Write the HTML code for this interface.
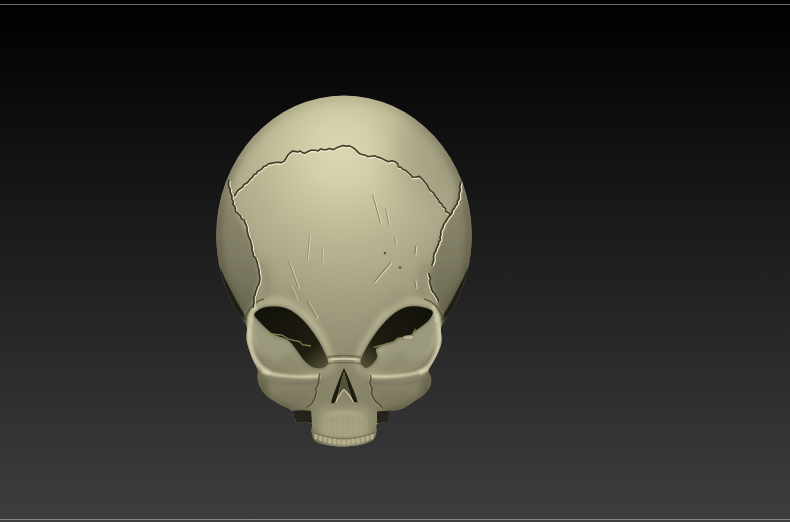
<!DOCTYPE html>
<html><head><meta charset="utf-8">
<style>
html,body{margin:0;padding:0;background:#000;}
body{width:790px;height:522px;overflow:hidden;position:relative;font-family:"Liberation Sans",sans-serif;}
svg{position:absolute;left:0;top:0;display:block;}
</style></head><body>
<svg width="790" height="522" viewBox="0 0 790 522">
<defs>
<linearGradient id="bg" x1="0" y1="0" x2="0" y2="1">
<stop offset="0" stop-color="#000"/>
<stop offset="0.12" stop-color="#070707"/>
<stop offset="1" stop-color="#3e3e3e"/>
</linearGradient>
<radialGradient id="sk" gradientUnits="userSpaceOnUse" cx="344" cy="165" r="210" fx="340" fy="150">
<stop offset="0" stop-color="#dcd8b2"/>
<stop offset="0.15" stop-color="#d3cfaa"/>
<stop offset="0.3" stop-color="#c4c09c"/>
<stop offset="0.48" stop-color="#b3af8f"/>
<stop offset="0.68" stop-color="#a29e80"/>
<stop offset="1" stop-color="#8a866b"/>
</radialGradient>
<linearGradient id="sockL" gradientUnits="userSpaceOnUse" x1="275" y1="310" x2="322" y2="366">
<stop offset="0" stop-color="#14130b"/>
<stop offset="0.72" stop-color="#1f1d10"/>
<stop offset="1" stop-color="#4e4a33"/>
</linearGradient>
<linearGradient id="sockR" gradientUnits="userSpaceOnUse" x1="415" y1="310" x2="368" y2="366">
<stop offset="0" stop-color="#14130b"/>
<stop offset="0.72" stop-color="#1f1d10"/>
<stop offset="1" stop-color="#4e4a33"/>
</linearGradient>
<linearGradient id="maxG" gradientUnits="userSpaceOnUse" x1="0" y1="400" x2="0" y2="446">
<stop offset="0" stop-color="#bcb894" stop-opacity="0"/>
<stop offset="0.4" stop-color="#bcb894" stop-opacity="0.7"/>
<stop offset="1" stop-color="#b6b28f"/>
</linearGradient>
<linearGradient id="tempL" gradientUnits="userSpaceOnUse" x1="0" y1="160" x2="0" y2="330">
<stop offset="0" stop-color="#9a9679" stop-opacity="0"/>
<stop offset="0.15" stop-color="#948f73" stop-opacity="0.7"/>
<stop offset="0.3" stop-color="#7f7c63" stop-opacity="1"/>
<stop offset="0.6" stop-color="#716e58"/>
<stop offset="1" stop-color="#55533f"/>
</linearGradient>
<linearGradient id="tempR" gradientUnits="userSpaceOnUse" x1="0" y1="160" x2="0" y2="330">
<stop offset="0" stop-color="#9a9679" stop-opacity="0"/>
<stop offset="0.15" stop-color="#948f73" stop-opacity="0.7"/>
<stop offset="0.3" stop-color="#7f7c63" stop-opacity="1"/>
<stop offset="0.6" stop-color="#716e58"/>
<stop offset="1" stop-color="#55533f"/>
</linearGradient>
<linearGradient id="edgeG" gradientUnits="userSpaceOnUse" x1="0" y1="95" x2="0" y2="330">
<stop offset="0" stop-color="#4e4b37" stop-opacity="0.15"/>
<stop offset="0.3" stop-color="#4e4b37" stop-opacity="0.55"/>
<stop offset="1" stop-color="#4e4b37" stop-opacity="0.85"/>
</linearGradient>
<filter id="b2" filterUnits="userSpaceOnUse" x="0" y="0" width="790" height="522"><feGaussianBlur stdDeviation="2"/></filter>
<filter id="b3" filterUnits="userSpaceOnUse" x="0" y="0" width="790" height="522"><feGaussianBlur stdDeviation="3"/></filter>
<filter id="b4" filterUnits="userSpaceOnUse" x="0" y="0" width="790" height="522"><feGaussianBlur stdDeviation="4"/></filter>
<filter id="b5" filterUnits="userSpaceOnUse" x="0" y="0" width="790" height="522"><feGaussianBlur stdDeviation="5"/></filter>
<filter id="b8" filterUnits="userSpaceOnUse" x="0" y="0" width="790" height="522"><feGaussianBlur stdDeviation="8"/></filter>
<filter id="b12" filterUnits="userSpaceOnUse" x="0" y="0" width="790" height="522"><feGaussianBlur stdDeviation="12"/></filter>
<filter id="b1" filterUnits="userSpaceOnUse" x="0" y="0" width="790" height="522"><feGaussianBlur stdDeviation="1"/></filter>
<filter id="b05" filterUnits="userSpaceOnUse" x="0" y="0" width="790" height="522"><feGaussianBlur stdDeviation="0.6"/></filter>
<clipPath id="clip"><path d="M216.3,235.0 A127.7,139.5 0 1,1 471.7,235.0 A127.7,139.5 0 1,1 216.3,235.0 Z"/><path d="M461.4,290.0 C459.7,293.3 455.0,304.2 451.7,310.0 C448.4,315.8 443.2,319.8 441.6,325.0 C439.9,330.2 442.1,336.6 441.6,341.0 C441.1,345.4 439.9,348.1 438.5,351.6 C437.1,355.1 434.9,358.8 433.2,362.0 C431.5,365.2 428.9,368.1 428.5,370.6 C428.1,373.1 430.7,374.6 431.0,377.0 C431.3,379.4 431.5,382.5 430.5,385.3 C429.5,388.1 427.5,391.3 425.0,393.8 C422.5,396.3 419.0,398.1 415.3,400.5 C411.6,402.9 407.2,406.6 403.0,408.5 C398.8,410.4 392.5,409.9 390.0,412.0 C387.5,414.1 390.2,419.0 388.0,421.0 C385.8,423.0 378.9,422.2 377.0,424.0 C375.1,425.8 377.2,429.3 376.5,432.0 C375.8,434.7 375.4,437.9 373.0,440.0 C370.6,442.1 366.8,443.4 362.0,444.5 C357.2,445.6 350.0,446.4 344.0,446.5 C338.0,446.6 330.8,445.9 326.0,445.0 C321.2,444.1 317.4,443.2 315.0,441.0 C312.6,438.8 312.2,435.0 311.5,432.0 C310.8,429.0 313.6,424.7 311.0,423.0 C308.4,421.3 299.2,424.0 296.0,422.0 C292.8,420.0 294.8,414.0 292.0,411.0 C289.2,408.0 283.1,406.4 279.0,404.0 C274.9,401.6 270.7,399.4 267.5,396.6 C264.3,393.8 261.7,390.2 260.0,387.0 C258.3,383.8 257.9,380.4 257.5,377.5 C257.1,374.6 258.4,372.8 257.5,369.5 C256.6,366.2 253.8,362.9 252.0,358.0 C250.2,353.1 247.4,345.5 246.5,340.0 C245.6,334.5 248.1,330.0 246.4,325.0 C244.7,320.0 239.6,315.8 236.3,310.0 C233.0,304.2 228.3,293.3 226.6,290.0  L344,250 Z"/></clipPath>
</defs>
<rect x="0" y="0" width="790" height="522" fill="url(#bg)"/>
<rect x="0" y="4" width="790" height="1" fill="#6a6a6a"/>
<rect x="0" y="519" width="790" height="1" fill="#888"/>

<g clip-path="url(#clip)">
<rect x="200" y="90" width="290" height="360" fill="url(#sk)"/>
<ellipse cx="440" cy="150" rx="45" ry="50" fill="#87846a" opacity="0.35" filter="url(#b12)"/>
<path d="M286,296 C300,312 318,335 330,356" fill="none" stroke="#85816a" stroke-width="10" opacity="0.35" filter="url(#b5)"/>
<path d="M402,296 C388,312 370,335 358,356" fill="none" stroke="#85816a" stroke-width="10" opacity="0.35" filter="url(#b5)"/>
<path d="M252,312 C262,304 285,300 300,310" fill="none" stroke="#6d6a52" stroke-width="4" opacity="0.45" filter="url(#b2)"/>
<path d="M436,312 C426,304 403,300 388,310" fill="none" stroke="#6d6a52" stroke-width="4" opacity="0.45" filter="url(#b2)"/>
<path d="M229,176 L236,212 L250,239 L258,267 L260,278 L255,292 L253,308 L254,316 L244,330 L225,300 L216,260 L216,220 L222,190 Z" fill="url(#tempL)" opacity="0.75" filter="url(#b2)"/>
<path d="M461,178 L450,215 L438,244 L432,265 L429,273 L431,287 L438,302 L434,313 L444,330 L462,300 L472,260 L472,220 L466,190 Z" fill="url(#tempR)" opacity="0.75" filter="url(#b2)"/>
<path d="M262,262 C268,280 270,295 262,310" fill="none" stroke="#8a8769" stroke-width="8" opacity="0.55" filter="url(#b3)"/>
<path d="M426,262 C420,280 418,295 426,310" fill="none" stroke="#8a8769" stroke-width="8" opacity="0.55" filter="url(#b3)"/>
<path d="M244.2,322.0 A127.7,139.5 0 1,1 443.8,322.0" fill="none" stroke="url(#edgeG)" stroke-width="8" filter="url(#b4)"/>
<path d="M461.4,290.0 C459.7,293.3 455.0,304.2 451.7,310.0 C448.4,315.8 443.2,319.8 441.6,325.0 C439.9,330.2 442.1,336.6 441.6,341.0 C441.1,345.4 439.9,348.1 438.5,351.6 C437.1,355.1 434.9,358.8 433.2,362.0 C431.5,365.2 428.9,368.1 428.5,370.6 C428.1,373.1 430.7,374.6 431.0,377.0 C431.3,379.4 431.5,382.5 430.5,385.3 C429.5,388.1 427.5,391.3 425.0,393.8 C422.5,396.3 419.0,398.1 415.3,400.5 C411.6,402.9 407.2,406.6 403.0,408.5 C398.8,410.4 392.5,409.9 390.0,412.0 C387.5,414.1 390.2,419.0 388.0,421.0 C385.8,423.0 378.9,422.2 377.0,424.0 C375.1,425.8 377.2,429.3 376.5,432.0 C375.8,434.7 375.4,437.9 373.0,440.0 C370.6,442.1 366.8,443.4 362.0,444.5 C357.2,445.6 350.0,446.4 344.0,446.5 C338.0,446.6 330.8,445.9 326.0,445.0 C321.2,444.1 317.4,443.2 315.0,441.0 C312.6,438.8 312.2,435.0 311.5,432.0 C310.8,429.0 313.6,424.7 311.0,423.0 C308.4,421.3 299.2,424.0 296.0,422.0 C292.8,420.0 294.8,414.0 292.0,411.0 C289.2,408.0 283.1,406.4 279.0,404.0 C274.9,401.6 270.7,399.4 267.5,396.6 C264.3,393.8 261.7,390.2 260.0,387.0 C258.3,383.8 257.9,380.4 257.5,377.5 C257.1,374.6 258.4,372.8 257.5,369.5 C256.6,366.2 253.8,362.9 252.0,358.0 C250.2,353.1 247.4,345.5 246.5,340.0 C245.6,334.5 248.1,330.0 246.4,325.0 C244.7,320.0 239.6,315.8 236.3,310.0 C233.0,304.2 228.3,293.3 226.6,290.0 " fill="none" stroke="#4e4b37" stroke-width="6" filter="url(#b3)" opacity="0.6"/>
<path d="M218.0,268.4 L218.7,271.5 L219.5,274.5 L220.3,277.6 L221.2,280.6 L222.2,283.6 L223.3,286.7 L224.4,289.7 L225.6,292.8 L226.9,295.8 L228.2,298.8 L229.7,301.9 L231.2,304.9 L232.9,308.0 L234.6,311.0 L236.4,314.1 L238.4,317.1 L240.4,320.1 L242.6,323.2 L244.8,326.2 L247.3,329.3 L252.3,325.1 L250.0,322.2 L247.8,319.3 L245.7,316.4 L243.8,313.5 L242.0,310.6 L240.2,307.7 L238.6,304.8 L237.0,301.9 L235.5,299.0 L234.0,296.2 L232.5,293.4 L231.0,290.5 L229.6,287.7 L228.2,284.9 L226.8,282.1 L225.4,279.3 L224.1,276.5 L222.8,273.6 L221.6,270.8 L220.4,267.9 Z" fill="#1c1b15" opacity="0.95" filter="url(#b05)"/>
<path d="M470.0,268.4 L469.3,271.5 L468.5,274.5 L467.7,277.6 L466.8,280.6 L465.8,283.6 L464.7,286.7 L463.6,289.7 L462.4,292.8 L461.1,295.8 L459.8,298.8 L458.3,301.9 L456.8,304.9 L455.1,308.0 L453.4,311.0 L451.6,314.1 L449.6,317.1 L447.6,320.1 L445.4,323.2 L443.2,326.2 L440.7,329.3 L435.7,325.1 L438.0,322.2 L440.2,319.3 L442.3,316.4 L444.2,313.5 L446.0,310.6 L447.8,307.7 L449.4,304.8 L451.0,301.9 L452.5,299.0 L454.0,296.2 L455.5,293.4 L457.0,290.5 L458.4,287.7 L459.8,284.9 L461.2,282.1 L462.6,279.3 L463.9,276.5 L465.2,273.6 L466.4,270.8 L467.6,267.9 Z" fill="#1c1b15" opacity="0.95" filter="url(#b05)"/>
<path d="M246.0,318.0 C247.7,313.7 251.7,307.3 256.0,304.0 C260.3,300.7 266.3,298.7 272.0,298.0 C277.7,297.3 284.5,298.2 290.0,300.0 C295.5,301.8 300.3,305.0 305.0,309.0 C309.7,313.0 314.2,318.5 318.0,324.0 C321.8,329.5 325.3,336.0 328.0,342.0 C330.7,348.0 333.3,355.0 334.0,360.0 C334.7,365.0 334.7,369.3 332.0,372.0 C329.3,374.7 323.3,375.7 318.0,376.0 C312.7,376.3 306.3,375.7 300.0,374.0 C293.7,372.3 286.0,369.0 280.0,366.0 C274.0,363.0 268.7,359.8 264.0,356.0 C259.3,352.2 255.0,347.3 252.0,343.0 C249.0,338.7 247.0,334.2 246.0,330.0 C245.0,325.8 244.3,322.3 246.0,318.0 Z" fill="#cfcba7" opacity="0.6" filter="url(#b3)"/>
<path d="M442.0,318.0 C440.2,313.5 436.3,306.3 432.0,303.0 C427.7,299.7 421.7,298.2 416.0,298.0 C410.3,297.8 403.5,299.7 398.0,302.0 C392.5,304.3 387.5,307.7 383.0,312.0 C378.5,316.3 374.8,322.3 371.0,328.0 C367.2,333.7 362.7,340.3 360.0,346.0 C357.3,351.7 355.3,357.5 355.0,362.0 C354.7,366.5 355.2,370.5 358.0,373.0 C360.8,375.5 366.3,376.8 372.0,377.0 C377.7,377.2 385.3,375.8 392.0,374.0 C398.7,372.2 406.0,369.2 412.0,366.0 C418.0,362.8 423.7,359.0 428.0,355.0 C432.3,351.0 435.5,346.2 438.0,342.0 C440.5,337.8 442.3,334.0 443.0,330.0 C443.7,326.0 443.8,322.5 442.0,318.0 Z" fill="#cfcba7" opacity="0.6" filter="url(#b3)"/>
<path d="M255,316 L259,322 L267,329 L274,334.5 L288,340 L297,350 L305,362 L316,369 L300,373 L280,369 L265,360 L256,344 L253,328 Z" fill="#777562" opacity="0.4" filter="url(#b2)"/>
<path d="M433,313 L428,321.6 L418,330 L412.5,336 L402,339 L394,343 L384,347.4 L377,357.5 L370,366 L388,373 L408,369 L423,360 L432,344 L436,328 Z" fill="#777562" opacity="0.4" filter="url(#b2)"/>
<path d="M290,352 C300,362 310,368 326,368 L318,377 C300,376 285,370 275,362 Z" fill="#7b7759" opacity="0.35" filter="url(#b3)"/>
<path d="M398,352 C388,362 378,368 362,368 L370,377 C388,376 403,370 413,362 Z" fill="#7b7759" opacity="0.35" filter="url(#b3)"/>
<path d="M255,378 C275,385 300,388 322,385 L332,392 L330,405 L318,412 L292,412 C275,406 262,398 255,378 Z" fill="#7e7b62" opacity="0.35" filter="url(#b3)"/>
<path d="M433,378 C413,385 388,388 366,385 L356,392 L358,405 L370,412 L396,412 C413,406 426,398 433,378 Z" fill="#7e7b62" opacity="0.35" filter="url(#b3)"/>
<path d="M322,366 C335,362 353,362 366,366 L372,395 L366,410 L322,410 L316,395 Z" fill="#8a876c" opacity="0.45" filter="url(#b3)"/>
<ellipse cx="262" cy="388" rx="6" ry="11" fill="#55523f" opacity="0.5" filter="url(#b3)"/>
<ellipse cx="426" cy="388" rx="6" ry="11" fill="#55523f" opacity="0.5" filter="url(#b3)"/>
<ellipse cx="288" cy="401" rx="24" ry="8" fill="#6e6b55" opacity="0.4" filter="url(#b4)"/>
<ellipse cx="400" cy="401" rx="24" ry="8" fill="#6e6b55" opacity="0.4" filter="url(#b4)"/>
<path d="M262,398 C275,406 290,410 312,411" fill="none" stroke="#5d5a45" stroke-width="4" opacity="0.55" filter="url(#b2)"/>
<path d="M426,398 C414,406 399,410 377,411" fill="none" stroke="#5d5a45" stroke-width="4" opacity="0.55" filter="url(#b2)"/>
<path d="M256,306 C248,318 247,338 252,352 C256,364 262,370 270,373" fill="none" stroke="#d6d2ae" stroke-width="5" opacity="0.85" filter="url(#b1)"/>
<path d="M432,306 C440,318 442,338 437,352 C433,364 427,370 419,373" fill="none" stroke="#d6d2ae" stroke-width="5" opacity="0.85" filter="url(#b1)"/>
<path d="M264,299 C255,301 248,309 244.5,320 C242,334 244,350 250,363" fill="none" stroke="#4f4c3a" stroke-width="1.6" opacity="0.75" filter="url(#b05)"/>
<path d="M424,299 C433,301 440,309 443.5,320 C446,334 444,350 438,363" fill="none" stroke="#4f4c3a" stroke-width="1.6" opacity="0.75" filter="url(#b05)"/>
<path d="M262,371 C275,376 300,378 320,376" fill="none" stroke="#dcd8b4" stroke-width="3" opacity="0.9" filter="url(#b1)"/>
<path d="M427,369 C415,375 392,378 370,376" fill="none" stroke="#dcd8b4" stroke-width="3" opacity="0.9" filter="url(#b1)"/>
<path d="M258,378 C275,384 300,386 322,382" fill="none" stroke="#6f6c55" stroke-width="2.5" opacity="0.45" filter="url(#b1)"/>
<path d="M431,377 C415,384 390,386 368,382" fill="none" stroke="#6f6c55" stroke-width="2.5" opacity="0.45" filter="url(#b1)"/>
<path d="M327,357 C338,355 350,355 361,357" fill="none" stroke="#5a5742" stroke-width="1.5" opacity="0.7" filter="url(#b05)"/>
<path d="M328,360 C338,358.5 350,358.5 360,360" fill="none" stroke="#dedab6" stroke-width="2" opacity="0.8" filter="url(#b05)"/>
<path d="M326,364 C338,362 350,362 362,364" fill="none" stroke="#5a5742" stroke-width="1.3" opacity="0.6" filter="url(#b05)"/>
<path d="M254.3,314.4 C254.8,312.1 259.1,309.2 262.3,307.9 C265.6,306.6 270.0,306.5 273.8,306.5 C277.6,306.5 281.5,306.6 285.3,307.9 C289.1,309.2 293.0,311.4 296.8,314.4 C300.6,317.4 304.7,321.6 308.3,325.9 C311.9,330.2 315.4,335.5 318.3,340.3 C321.2,345.1 323.9,350.8 325.5,354.6 C327.1,358.4 328.2,361.1 327.7,363.3 C327.2,365.5 324.9,366.9 322.6,367.6 C320.3,368.3 316.9,368.6 314.0,367.6 C311.1,366.6 308.3,364.7 305.4,361.8 C302.5,358.9 299.7,353.9 296.8,350.3 C293.9,346.7 291.8,342.6 288.0,340.0 C284.2,337.4 277.6,336.4 274.0,334.5 C270.4,332.6 269.0,330.9 266.6,328.8 C264.2,326.7 261.4,324.0 259.4,321.6 C257.3,319.2 253.8,316.7 254.3,314.4 Z" fill="#3a3726" opacity="0.8" filter="url(#b2)"/>
<path d="M398.1,310.8 C401.9,308.5 405.5,307.1 409.6,306.5 C413.7,305.9 418.8,306.4 422.6,307.2 C426.4,308.0 431.5,309.4 432.6,311.5 C433.7,313.6 431.1,317.3 429.0,320.0 C426.9,322.7 422.3,325.7 420.0,327.5 C417.7,329.3 416.3,329.8 415.0,331.0 C413.7,332.2 413.6,333.9 412.0,335.0 C410.4,336.1 407.6,337.0 405.3,337.6 C403.0,338.2 400.0,337.7 398.1,338.4 C396.2,339.1 396.2,340.8 393.8,341.9 C391.4,343.0 386.8,343.8 383.8,345.0 C380.8,346.2 377.1,346.9 376.0,349.0 C374.9,351.1 378.0,354.6 377.0,357.5 C376.0,360.4 372.0,364.4 370.0,366.1 C368.0,367.8 366.5,368.3 365.0,367.6 C363.5,366.9 361.0,364.2 360.8,361.8 C360.6,359.4 361.5,357.5 363.6,353.2 C365.8,348.9 369.9,341.5 373.7,336.0 C377.5,330.5 382.5,324.3 386.6,320.1 C390.7,315.9 394.3,313.1 398.1,310.8 Z" fill="#3a3726" opacity="0.8" filter="url(#b2)"/>
<path d="M254.3,314.4 C254.8,312.1 259.1,309.2 262.3,307.9 C265.6,306.6 270.0,306.5 273.8,306.5 C277.6,306.5 281.5,306.6 285.3,307.9 C289.1,309.2 293.0,311.4 296.8,314.4 C300.6,317.4 304.7,321.6 308.3,325.9 C311.9,330.2 315.4,335.5 318.3,340.3 C321.2,345.1 323.9,350.8 325.5,354.6 C327.1,358.4 328.2,361.1 327.7,363.3 C327.2,365.5 324.9,366.9 322.6,367.6 C320.3,368.3 316.9,368.6 314.0,367.6 C311.1,366.6 308.3,364.7 305.4,361.8 C302.5,358.9 299.7,353.9 296.8,350.3 C293.9,346.7 291.8,342.6 288.0,340.0 C284.2,337.4 277.6,336.4 274.0,334.5 C270.4,332.6 269.0,330.9 266.6,328.8 C264.2,326.7 261.4,324.0 259.4,321.6 C257.3,319.2 253.8,316.7 254.3,314.4 Z" fill="url(#sockL)"/>
<path d="M398.1,310.8 C401.9,308.5 405.5,307.1 409.6,306.5 C413.7,305.9 418.8,306.4 422.6,307.2 C426.4,308.0 431.5,309.4 432.6,311.5 C433.7,313.6 431.1,317.3 429.0,320.0 C426.9,322.7 422.3,325.7 420.0,327.5 C417.7,329.3 416.3,329.8 415.0,331.0 C413.7,332.2 413.6,333.9 412.0,335.0 C410.4,336.1 407.6,337.0 405.3,337.6 C403.0,338.2 400.0,337.7 398.1,338.4 C396.2,339.1 396.2,340.8 393.8,341.9 C391.4,343.0 386.8,343.8 383.8,345.0 C380.8,346.2 377.1,346.9 376.0,349.0 C374.9,351.1 378.0,354.6 377.0,357.5 C376.0,360.4 372.0,364.4 370.0,366.1 C368.0,367.8 366.5,368.3 365.0,367.6 C363.5,366.9 361.0,364.2 360.8,361.8 C360.6,359.4 361.5,357.5 363.6,353.2 C365.8,348.9 369.9,341.5 373.7,336.0 C377.5,330.5 382.5,324.3 386.6,320.1 C390.7,315.9 394.3,313.1 398.1,310.8 Z" fill="url(#sockR)"/>
<path d="M268,333.8 L276.6,334.5 L282.4,335.2 L288.1,338.8 L293.9,340.3 L299.6,341.7 L302.5,344.6 L311.1,346" fill="none" stroke="#8d8755" stroke-width="1.3" opacity="0.9" stroke-linejoin="round"/>
<path d="M415.4,328.8 L412.5,334.5 L405.3,337.4 L398.1,338.1 L393.8,341.7 L383.8,344.6 L373.7,347.4" fill="none" stroke="#8d8755" stroke-width="1.3" opacity="0.9" stroke-linejoin="round"/>
<ellipse cx="408" cy="337" rx="5" ry="1.8" fill="#cfcba6" opacity="0.7" filter="url(#b05)"/>
<path d="M309,402 C322,398 366,398 379,402 L378,428 C372,436 360,438 344,438 C328,438 316,436 311,428 Z" fill="url(#maxG)" opacity="0.8" filter="url(#b3)"/>
<path d="M310,408 L318,408 L320,436 L313,436 Z" fill="#6f6c53" opacity="0.45" filter="url(#b3)"/>
<path d="M370,408 L378,408 L376,436 L368,436 Z" fill="#6f6c53" opacity="0.45" filter="url(#b3)"/>
<path d="M326,416 C336,412 352,412 362,416" fill="none" stroke="#d4d0ac" stroke-width="3" opacity="0.5" filter="url(#b2)"/>
<line x1="314.0" y1="414" x2="314.0" y2="434" stroke="#85826a" stroke-width="0.7" opacity="0.35"/>
<line x1="317.2" y1="414" x2="317.2" y2="434" stroke="#85826a" stroke-width="0.7" opacity="0.35"/>
<line x1="320.4" y1="414" x2="320.4" y2="434" stroke="#85826a" stroke-width="0.7" opacity="0.35"/>
<line x1="323.6" y1="414" x2="323.6" y2="434" stroke="#85826a" stroke-width="0.7" opacity="0.35"/>
<line x1="326.8" y1="414" x2="326.8" y2="434" stroke="#85826a" stroke-width="0.7" opacity="0.35"/>
<line x1="330.0" y1="414" x2="330.0" y2="434" stroke="#85826a" stroke-width="0.7" opacity="0.35"/>
<line x1="333.2" y1="414" x2="333.2" y2="434" stroke="#85826a" stroke-width="0.7" opacity="0.35"/>
<line x1="336.4" y1="414" x2="336.4" y2="434" stroke="#85826a" stroke-width="0.7" opacity="0.35"/>
<line x1="339.6" y1="414" x2="339.6" y2="434" stroke="#85826a" stroke-width="0.7" opacity="0.35"/>
<line x1="342.8" y1="414" x2="342.8" y2="434" stroke="#85826a" stroke-width="0.7" opacity="0.35"/>
<line x1="346.0" y1="414" x2="346.0" y2="434" stroke="#85826a" stroke-width="0.7" opacity="0.35"/>
<line x1="349.2" y1="414" x2="349.2" y2="434" stroke="#85826a" stroke-width="0.7" opacity="0.35"/>
<line x1="352.4" y1="414" x2="352.4" y2="434" stroke="#85826a" stroke-width="0.7" opacity="0.35"/>
<line x1="355.6" y1="414" x2="355.6" y2="434" stroke="#85826a" stroke-width="0.7" opacity="0.35"/>
<line x1="358.8" y1="414" x2="358.8" y2="434" stroke="#85826a" stroke-width="0.7" opacity="0.35"/>
<line x1="362.0" y1="414" x2="362.0" y2="434" stroke="#85826a" stroke-width="0.7" opacity="0.35"/>
<line x1="365.2" y1="414" x2="365.2" y2="434" stroke="#85826a" stroke-width="0.7" opacity="0.35"/>
<line x1="368.4" y1="414" x2="368.4" y2="434" stroke="#85826a" stroke-width="0.7" opacity="0.35"/>
<line x1="371.6" y1="414" x2="371.6" y2="434" stroke="#85826a" stroke-width="0.7" opacity="0.35"/>
<line x1="374.8" y1="414" x2="374.8" y2="434" stroke="#85826a" stroke-width="0.7" opacity="0.35"/>
<path d="M313,432 C322,440 336,443 344,443 C352,443 366,440 376,432 L375,436 C366,445 352,447.5 344,447.5 C336,447.5 322,445 314,436 Z" fill="#8d8a6e"/>
<rect x="314.4" y="434.0" width="3.2" height="5.5" rx="1.5" fill="#b3af8d"/>
<rect x="318.9" y="435.4" width="3.5" height="5.5" rx="1.5" fill="#b3af8d"/>
<rect x="323.5" y="436.8" width="3.7" height="5.5" rx="1.5" fill="#b3af8d"/>
<rect x="328.0" y="437.9" width="3.9" height="5.5" rx="1.5" fill="#b3af8d"/>
<rect x="332.6" y="438.8" width="4.1" height="5.5" rx="1.5" fill="#b3af8d"/>
<rect x="337.3" y="439.3" width="4.2" height="5.5" rx="1.5" fill="#b3af8d"/>
<rect x="341.9" y="439.5" width="4.2" height="5.5" rx="1.5" fill="#b3af8d"/>
<rect x="346.6" y="439.3" width="4.2" height="5.5" rx="1.5" fill="#b3af8d"/>
<rect x="351.3" y="438.8" width="4.1" height="5.5" rx="1.5" fill="#b3af8d"/>
<rect x="356.0" y="437.9" width="3.9" height="5.5" rx="1.5" fill="#b3af8d"/>
<rect x="360.8" y="436.8" width="3.7" height="5.5" rx="1.5" fill="#b3af8d"/>
<rect x="365.6" y="435.4" width="3.5" height="5.5" rx="1.5" fill="#b3af8d"/>
<rect x="370.4" y="434.0" width="3.2" height="5.5" rx="1.5" fill="#b3af8d"/>
<path d="M312,431.5 C325,438 340,438.5 344,438.5 C348,438.5 363,438 377,431.5" fill="none" stroke="#6b684f" stroke-width="1" opacity="0.7"/>
<path d="M344,368 C341,374 336,388 333,396 C332,399 331,402 331.5,403.5 L335.5,402.5 C337.5,396 339.5,388 341.5,380 C342.5,376 343.5,373 344,371 C344.5,373 345.5,376 346.5,380 C348.5,388 351,396 353.5,402 L357.5,402.5 C357,399 356,397 355,394 C352,386 347,374 344,368 Z" fill="#1c1a11" filter="url(#b05)"/>
<path d="M344,371 C342.5,376 340.5,386 338,396 C340,394 342,391 344,390 C346,391 348,394 350.5,396 C348,386 345.5,376 344,371 Z" fill="#4f4c39" opacity="0.9" filter="url(#b05)"/>
<path d="M335.5,402.5 C339,396 341,391.5 344,389.5 C347,391.5 350,396 353.5,402" fill="none" stroke="#d8d4b0" stroke-width="1.3" opacity="0.85" filter="url(#b05)"/>
<path d="M291,411 C298,410 306,410 311,411 L312,423 C305,424 299,424 296,422 C294,418 292,414 291,411 Z" fill="#25231a" filter="url(#b05)"/>
<path d="M377,411.5 C384,410.5 391,410.5 396,411 C395,415 393,419 391,422 C387,424 381,424 377,423 Z" fill="#25231a" filter="url(#b05)"/>
<path d="M234.2,196.3 L236.0,193.5 L237.7,190.7 L240.3,188.6 L242.6,187.1 L243.9,184.4 L246.5,183.3 L248.6,181.3 L250.4,179.0 L252.6,177.1 L253.9,174.7 L256.4,173.7 L257.7,171.2 L260.2,170.2 L262.2,168.6 L263.8,166.5 L266.4,165.7 L268.3,163.8 L271.0,163.4 L274.0,162.7 L277.1,162.3 L281.7,162.6 L284.5,160.8 L286.3,158.0 L287.8,155.2 L290.0,153.0 L292.4,151.1 L295.0,151.4 L297.5,152.0 L300.1,151.1 L302.3,152.4 L304.7,153.4 L307.7,151.7 L310.8,150.3 L315.4,150.3 L318.1,151.0 L320.5,148.9 L323.1,149.6 L326.3,149.8 L329.2,148.5 L333.8,149.6 L336.7,147.7 L340.0,146.5 L343.4,145.6 L346.9,146.2 L349.6,145.9 L352.1,147.1 L354.9,149.0 L357.2,151.4 L359.5,153.6 L362.4,154.8 L365.2,155.1 L367.6,156.6 L371.1,156.3 L374.5,155.7 L377.3,157.1 L380.3,157.7 L383.1,159.1 L385.7,160.5 L388.3,161.7 L391.8,160.8 L395.2,161.7 L397.6,163.8 L398.6,166.9 L401.2,167.5 L403.0,169.5 L405.5,170.3 L407.9,172.5 L410.4,174.6 L412.4,177.2 L415.9,177.0 L419.3,176.4 L422.8,179.8 L424.6,182.0 L426.5,184.2 L427.9,186.7 L429.2,189.2 L431.0,191.2 L433.5,192.8 L434.8,195.3 L436.4,197.6 L438.2,199.7 L439.4,202.3 L441.7,204.0 L443.0,206.7 L445.5,208.6 L446.1,211.8 L449.2,213.2 L450.3,216.0" fill="none" stroke="#eeeacb" stroke-width="1.6" opacity="0.95" transform="translate(0.4,1.3)" stroke-linejoin="round"/>
<path d="M234.2,196.3 L236.0,193.5 L237.7,190.7 L240.3,188.6 L242.6,187.1 L243.9,184.4 L246.5,183.3 L248.6,181.3 L250.4,179.0 L252.6,177.1 L253.9,174.7 L256.4,173.7 L257.7,171.2 L260.2,170.2 L262.2,168.6 L263.8,166.5 L266.4,165.7 L268.3,163.8 L271.0,163.4 L274.0,162.7 L277.1,162.3 L281.7,162.6 L284.5,160.8 L286.3,158.0 L287.8,155.2 L290.0,153.0 L292.4,151.1 L295.0,151.4 L297.5,152.0 L300.1,151.1 L302.3,152.4 L304.7,153.4 L307.7,151.7 L310.8,150.3 L315.4,150.3 L318.1,151.0 L320.5,148.9 L323.1,149.6 L326.3,149.8 L329.2,148.5 L333.8,149.6 L336.7,147.7 L340.0,146.5 L343.4,145.6 L346.9,146.2 L349.6,145.9 L352.1,147.1 L354.9,149.0 L357.2,151.4 L359.5,153.6 L362.4,154.8 L365.2,155.1 L367.6,156.6 L371.1,156.3 L374.5,155.7 L377.3,157.1 L380.3,157.7 L383.1,159.1 L385.7,160.5 L388.3,161.7 L391.8,160.8 L395.2,161.7 L397.6,163.8 L398.6,166.9 L401.2,167.5 L403.0,169.5 L405.5,170.3 L407.9,172.5 L410.4,174.6 L412.4,177.2 L415.9,177.0 L419.3,176.4 L422.8,179.8 L424.6,182.0 L426.5,184.2 L427.9,186.7 L429.2,189.2 L431.0,191.2 L433.5,192.8 L434.8,195.3 L436.4,197.6 L438.2,199.7 L439.4,202.3 L441.7,204.0 L443.0,206.7 L445.5,208.6 L446.1,211.8 L449.2,213.2 L450.3,216.0" fill="none" stroke="#2e2c1c" stroke-width="1.6" opacity="0.90" stroke-linejoin="round"/>
<path d="M460.7,181.6 L460.5,184.4 L459.5,187.0 L460.4,189.9 L459.4,192.6 L459.0,195.3 L459.3,198.4 L457.5,201.0 L457.2,204.0 L455.4,206.0 L454.3,208.4 L452.4,210.3 L452.0,213.2 L450.3,215.2 L448.3,217.4 L446.7,220.0 L445.0,222.5 L443.4,225.0 L442.9,227.5 L441.5,229.7 L440.7,232.1 L441.0,234.8 L440.0,237.1 L440.6,239.8 L438.7,242.0 L438.5,244.5 L436.8,247.7 L435.7,251.2 L434.0,253.8 L433.5,256.8 L433.8,260.0 L432.8,262.8 L431.8,265.6" fill="none" stroke="#eeeacb" stroke-width="1.6" opacity="0.95" transform="translate(1.3,0.4)" stroke-linejoin="round"/>
<path d="M460.7,181.6 L460.5,184.4 L459.5,187.0 L460.4,189.9 L459.4,192.6 L459.0,195.3 L459.3,198.4 L457.5,201.0 L457.2,204.0 L455.4,206.0 L454.3,208.4 L452.4,210.3 L452.0,213.2 L450.3,215.2 L448.3,217.4 L446.7,220.0 L445.0,222.5 L443.4,225.0 L442.9,227.5 L441.5,229.7 L440.7,232.1 L441.0,234.8 L440.0,237.1 L440.6,239.8 L438.7,242.0 L438.5,244.5 L436.8,247.7 L435.7,251.2 L434.0,253.8 L433.5,256.8 L433.8,260.0 L432.8,262.8 L431.8,265.6" fill="none" stroke="#2e2c1c" stroke-width="1.6" opacity="0.90" stroke-linejoin="round"/>
<path d="M228.8,180.0 L228.5,183.5 L228.8,187.0 L230.3,189.2 L230.1,191.9 L231.3,194.3 L232.0,196.7 L231.9,199.4 L233.5,201.6 L232.9,204.4 L234.9,206.5 L235.4,209.0 L235.7,211.6 L238.3,213.7 L240.7,216.1 L241.5,218.8 L244.3,220.3 L245.1,222.9 L246.4,225.3 L247.0,228.1 L247.1,231.0 L247.9,233.7 L248.5,236.5 L249.9,239.1 L251.0,241.8 L251.4,244.6 L252.2,247.3 L251.9,250.3 L253.3,252.9 L253.4,255.9 L255.8,258.2 L256.7,261.0 L257.5,263.8 L257.9,266.7 L259.0,269.5 L259.1,272.4 L259.5,275.4 L260.2,278.2" fill="none" stroke="#eeeacb" stroke-width="1.6" opacity="0.95" transform="translate(1.3,0.7)" stroke-linejoin="round"/>
<path d="M228.8,180.0 L228.5,183.5 L228.8,187.0 L230.3,189.2 L230.1,191.9 L231.3,194.3 L232.0,196.7 L231.9,199.4 L233.5,201.6 L232.9,204.4 L234.9,206.5 L235.4,209.0 L235.7,211.6 L238.3,213.7 L240.7,216.1 L241.5,218.8 L244.3,220.3 L245.1,222.9 L246.4,225.3 L247.0,228.1 L247.1,231.0 L247.9,233.7 L248.5,236.5 L249.9,239.1 L251.0,241.8 L251.4,244.6 L252.2,247.3 L251.9,250.3 L253.3,252.9 L253.4,255.9 L255.8,258.2 L256.7,261.0 L257.5,263.8 L257.9,266.7 L259.0,269.5 L259.1,272.4 L259.5,275.4 L260.2,278.2" fill="none" stroke="#2e2c1c" stroke-width="1.6" opacity="0.90" stroke-linejoin="round"/>
<path d="M260.0,278.0 L259.6,280.9 L259.2,283.9 L257.5,286.4 L256.7,289.3 L255.6,292.0 L255.1,294.6 L253.9,297.2 L254.1,299.9 L254.0,302.7 L253.5,305.3 L253.3,308.0" fill="none" stroke="#eeeacb" stroke-width="1.6" opacity="0.95" transform="translate(1.0,0.4)" stroke-linejoin="round"/>
<path d="M260.0,278.0 L259.6,280.9 L259.2,283.9 L257.5,286.4 L256.7,289.3 L255.6,292.0 L255.1,294.6 L253.9,297.2 L254.1,299.9 L254.0,302.7 L253.5,305.3 L253.3,308.0" fill="none" stroke="#2e2c1c" stroke-width="1.6" opacity="0.90" stroke-linejoin="round"/>
<path d="M429.0,273.0 L429.0,275.8 L430.6,278.3 L429.3,281.3 L430.0,284.0 L430.9,286.6 L431.5,289.5 L432.9,292.0 L434.9,294.2 L436.1,296.8 L437.9,299.1 L438.5,302.0" fill="none" stroke="#eeeacb" stroke-width="1.6" opacity="0.95" transform="translate(-1.0,0.4)" stroke-linejoin="round"/>
<path d="M429.0,273.0 L429.0,275.8 L430.6,278.3 L429.3,281.3 L430.0,284.0 L430.9,286.6 L431.5,289.5 L432.9,292.0 L434.9,294.2 L436.1,296.8 L437.9,299.1 L438.5,302.0" fill="none" stroke="#2e2c1c" stroke-width="1.6" opacity="0.90" stroke-linejoin="round"/>
<path d="M320.0,373.5 L319.1,376.8 L318.7,380.2 L318.6,383.2 L317.7,385.9 L316.0,388.3 L316.4,391.0 L316.3,393.7 L315.4,396.3 L314.7,398.8 L313.4,401.0 L311.7,403.7 L309.5,405.9 L306.6,407.2" fill="none" stroke="#eeeacb" stroke-width="1.6" opacity="0.27" transform="translate(0.7,0.4)" stroke-linejoin="round"/>
<path d="M320.0,373.5 L319.1,376.8 L318.7,380.2 L318.6,383.2 L317.7,385.9 L316.0,388.3 L316.4,391.0 L316.3,393.7 L315.4,396.3 L314.7,398.8 L313.4,401.0 L311.7,403.7 L309.5,405.9 L306.6,407.2" fill="none" stroke="#2e2c1c" stroke-width="1.6" opacity="0.63" stroke-linejoin="round"/>
<path d="M370.3,374.9 L370.8,377.6 L370.7,380.3 L369.7,382.9 L370.6,385.5 L372.0,388.1 L371.7,391.0 L371.3,393.7 L372.4,396.3 L374.0,399.3 L376.0,402.0 L378.5,403.5 L380.4,405.6 L382.0,408.0" fill="none" stroke="#eeeacb" stroke-width="1.6" opacity="0.27" transform="translate(-0.7,0.4)" stroke-linejoin="round"/>
<path d="M370.3,374.9 L370.8,377.6 L370.7,380.3 L369.7,382.9 L370.6,385.5 L372.0,388.1 L371.7,391.0 L371.3,393.7 L372.4,396.3 L374.0,399.3 L376.0,402.0 L378.5,403.5 L380.4,405.6 L382.0,408.0" fill="none" stroke="#2e2c1c" stroke-width="1.6" opacity="0.63" stroke-linejoin="round"/>
<line x1="372.8" y1="195.3" x2="380.5" y2="223.0" stroke="#ebe7c6" stroke-width="1.3" stroke-linecap="round" opacity="0.75" transform="translate(0.9,0.5)"/>
<line x1="372.8" y1="195.3" x2="380.5" y2="223.0" stroke="#6a6750" stroke-width="1.0" stroke-linecap="round" opacity="0.7"/>
<line x1="385.7" y1="209.0" x2="389.0" y2="225.0" stroke="#ebe7c6" stroke-width="1.2" stroke-linecap="round" opacity="0.75" transform="translate(0.9,0.5)"/>
<line x1="385.7" y1="209.0" x2="389.0" y2="225.0" stroke="#6a6750" stroke-width="0.9" stroke-linecap="round" opacity="0.7"/>
<line x1="390.7" y1="262.7" x2="374.4" y2="281.8" stroke="#ebe7c6" stroke-width="1.5" stroke-linecap="round" opacity="0.75" transform="translate(0.9,0.5)"/>
<line x1="390.7" y1="262.7" x2="374.4" y2="281.8" stroke="#6a6750" stroke-width="1.2" stroke-linecap="round" opacity="0.7"/>
<line x1="394.5" y1="238.7" x2="396.0" y2="244.0" stroke="#ebe7c6" stroke-width="1.3" stroke-linecap="round" opacity="0.75" transform="translate(0.9,0.5)"/>
<line x1="394.5" y1="238.7" x2="396.0" y2="244.0" stroke="#6a6750" stroke-width="1.0" stroke-linecap="round" opacity="0.7"/>
<line x1="415.6" y1="246.4" x2="415.0" y2="254.0" stroke="#ebe7c6" stroke-width="1.5" stroke-linecap="round" opacity="0.75" transform="translate(0.9,0.5)"/>
<line x1="415.6" y1="246.4" x2="415.0" y2="254.0" stroke="#6a6750" stroke-width="1.2" stroke-linecap="round" opacity="0.7"/>
<line x1="414.6" y1="279.0" x2="416.0" y2="288.0" stroke="#ebe7c6" stroke-width="1.5" stroke-linecap="round" opacity="0.75" transform="translate(0.9,0.5)"/>
<line x1="414.6" y1="279.0" x2="416.0" y2="288.0" stroke="#6a6750" stroke-width="1.2" stroke-linecap="round" opacity="0.7"/>
<line x1="289.0" y1="262.0" x2="298.2" y2="287.4" stroke="#ebe7c6" stroke-width="1.3" stroke-linecap="round" opacity="0.75" transform="translate(0.9,0.5)"/>
<line x1="289.0" y1="262.0" x2="298.2" y2="287.4" stroke="#6a6750" stroke-width="1.0" stroke-linecap="round" opacity="0.7"/>
<line x1="290.1" y1="285.0" x2="297.0" y2="298.9" stroke="#ebe7c6" stroke-width="1.2" stroke-linecap="round" opacity="0.75" transform="translate(0.9,0.5)"/>
<line x1="290.1" y1="285.0" x2="297.0" y2="298.9" stroke="#6a6750" stroke-width="0.9" stroke-linecap="round" opacity="0.7"/>
<line x1="307.4" y1="301.1" x2="316.6" y2="317.2" stroke="#ebe7c6" stroke-width="1.6" stroke-linecap="round" opacity="0.75" transform="translate(0.9,0.5)"/>
<line x1="307.4" y1="301.1" x2="316.6" y2="317.2" stroke="#6a6750" stroke-width="1.3" stroke-linecap="round" opacity="0.7"/>
<line x1="309.7" y1="234.5" x2="307.4" y2="259.8" stroke="#ebe7c6" stroke-width="0.9" stroke-linecap="round" opacity="0.75" transform="translate(0.9,0.5)"/>
<line x1="309.7" y1="234.5" x2="307.4" y2="259.8" stroke="#6a6750" stroke-width="0.6" stroke-linecap="round" opacity="0.7"/>
<line x1="322.3" y1="248.3" x2="322.0" y2="262.0" stroke="#ebe7c6" stroke-width="0.9" stroke-linecap="round" opacity="0.75" transform="translate(0.9,0.5)"/>
<line x1="322.3" y1="248.3" x2="322.0" y2="262.0" stroke="#6a6750" stroke-width="0.6" stroke-linecap="round" opacity="0.7"/>
<circle cx="384.9" cy="253.1" r="1.3" fill="#4a4733" opacity="0.8"/>
<circle cx="400.0" cy="267.5" r="1.3" fill="#4a4733" opacity="0.8"/>
</g>
</svg></body></html>
